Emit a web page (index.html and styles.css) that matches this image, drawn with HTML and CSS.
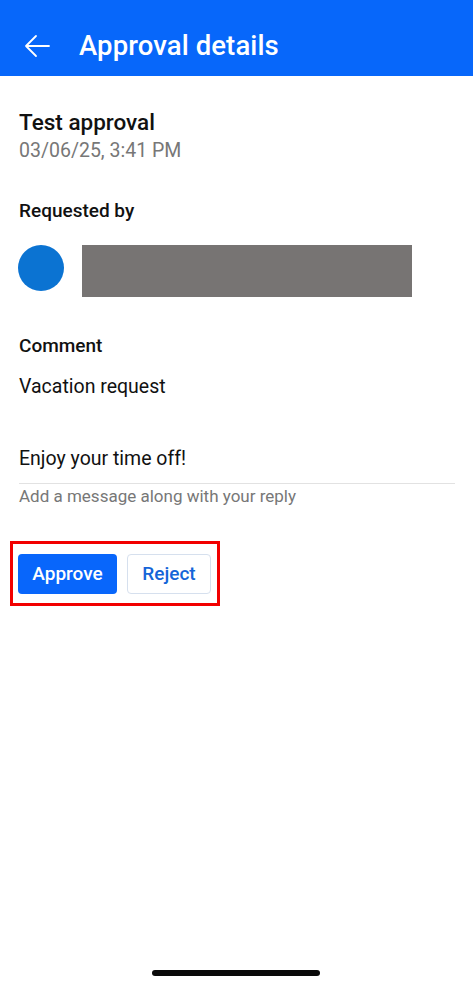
FILE: index.html
```html
<!DOCTYPE html>
<html>
<head>
<meta charset="utf-8">
<link rel="stylesheet" href="styles.css">
</head>
<body>
<header class="appbar">
  <svg class="back" width="28" height="24" viewBox="0 0 28 24"><path d="M26 12H3M13 2L3 12l10 10" fill="none" stroke="#fff" stroke-width="1.8" stroke-linecap="round" stroke-linejoin="round"/></svg>
  <h1 class="title">Approval details</h1>
</header>
<main class="content">
  <section class="summary">
    <div class="name">Test approval</div>
    <div class="date">03/06/25, 3:41 PM</div>
  </section>
  <section class="requested">
    <div class="label">Requested by</div>
    <div class="person">
      <div class="avatar"></div>
      <div class="redacted"></div>
    </div>
  </section>
  <section class="comment">
    <div class="label">Comment</div>
    <div class="text">Vacation request</div>
  </section>
  <section class="reply">
    <div class="reply-value">Enjoy your time off!</div>
    <div class="hint">Add a message along with your reply</div>
  </section>
  <div class="actions">
    <button class="btn primary">Approve</button>
    <button class="btn secondary">Reject</button>
  </div>
</main>
<div class="home-indicator"></div>
</body>
</html>
```
FILE: styles.css
```css
* { box-sizing: border-box; }
html, body { margin: 0; padding: 0; }
body {
  width: 473px;
  height: 987px;
  background: #fff;
  font-family: Roboto, "Noto Sans", Arial, sans-serif;
  color: #111;
  position: relative;
  overflow: hidden;
}
.appbar {
  height: 76px;
  background: #0767fa;
  display: flex;
  align-items: center;
  padding: 14px 0 0 23px;
  gap: 28px;
}
.back { display: block; margin-top: 1px; }
.title {
  margin: 0;
  color: #fff;
  font-size: 27.5px;
  font-weight: 500;
  letter-spacing: 0.1px;
}
.content { padding: 0 18px 0 19px; }
.summary { padding-top: 33px; }
.name { font-size: 22.5px; font-weight: 500; line-height: 27px; color: #111; }
.date { font-size: 19.5px; color: #777; line-height: 25px; margin-top: 2px; }
.requested { padding-top: 36px; }
.label { font-size: 19px; font-weight: 500; line-height: 24px; color: #111; }
.person { display: flex; align-items: flex-start; gap: 18px; margin-top: 22px; margin-left: -1px; }
.avatar { width: 46px; height: 46px; border-radius: 50%; background: #0b73d2; }
.redacted { width: 330px; height: 52px; background: #777473; }
.comment { padding-top: 37px; }
.text { font-size: 19.5px; line-height: 24px; margin-top: 17px; color: #111; }
.reply { padding-top: 48px; }
.reply-value { font-size: 19.5px; line-height: 24px; color: #111; padding-bottom: 12px; border-bottom: 1px solid #e2e2e2; }
.hint { font-size: 17px; color: #777; line-height: 20px; margin-top: 2px; }
.actions {
  margin-top: 35px;
  margin-left: -9px;
  width: 210px;
  height: 65px;
  border: 3px solid #f20000;
  display: flex;
  align-items: center;
  gap: 10px;
  padding-left: 5px;
}
.btn {
  height: 40px;
  font-family: Roboto, "Noto Sans", Arial, sans-serif;
  font-size: 19px;
  font-weight: 500;
  border-radius: 4px;
  padding: 0;
  cursor: pointer;
}
.primary { width: 99px; background: #0866fb; color: #fff; border: none; }
.secondary { width: 84px; background: #fff; color: #1565d8; border: 1px solid #d6e0ee; }
.home-indicator {
  position: absolute;
  left: 152px;
  top: 970px;
  width: 168px;
  height: 6px;
  border-radius: 3px;
  background: #0a0a0a;
}
```
